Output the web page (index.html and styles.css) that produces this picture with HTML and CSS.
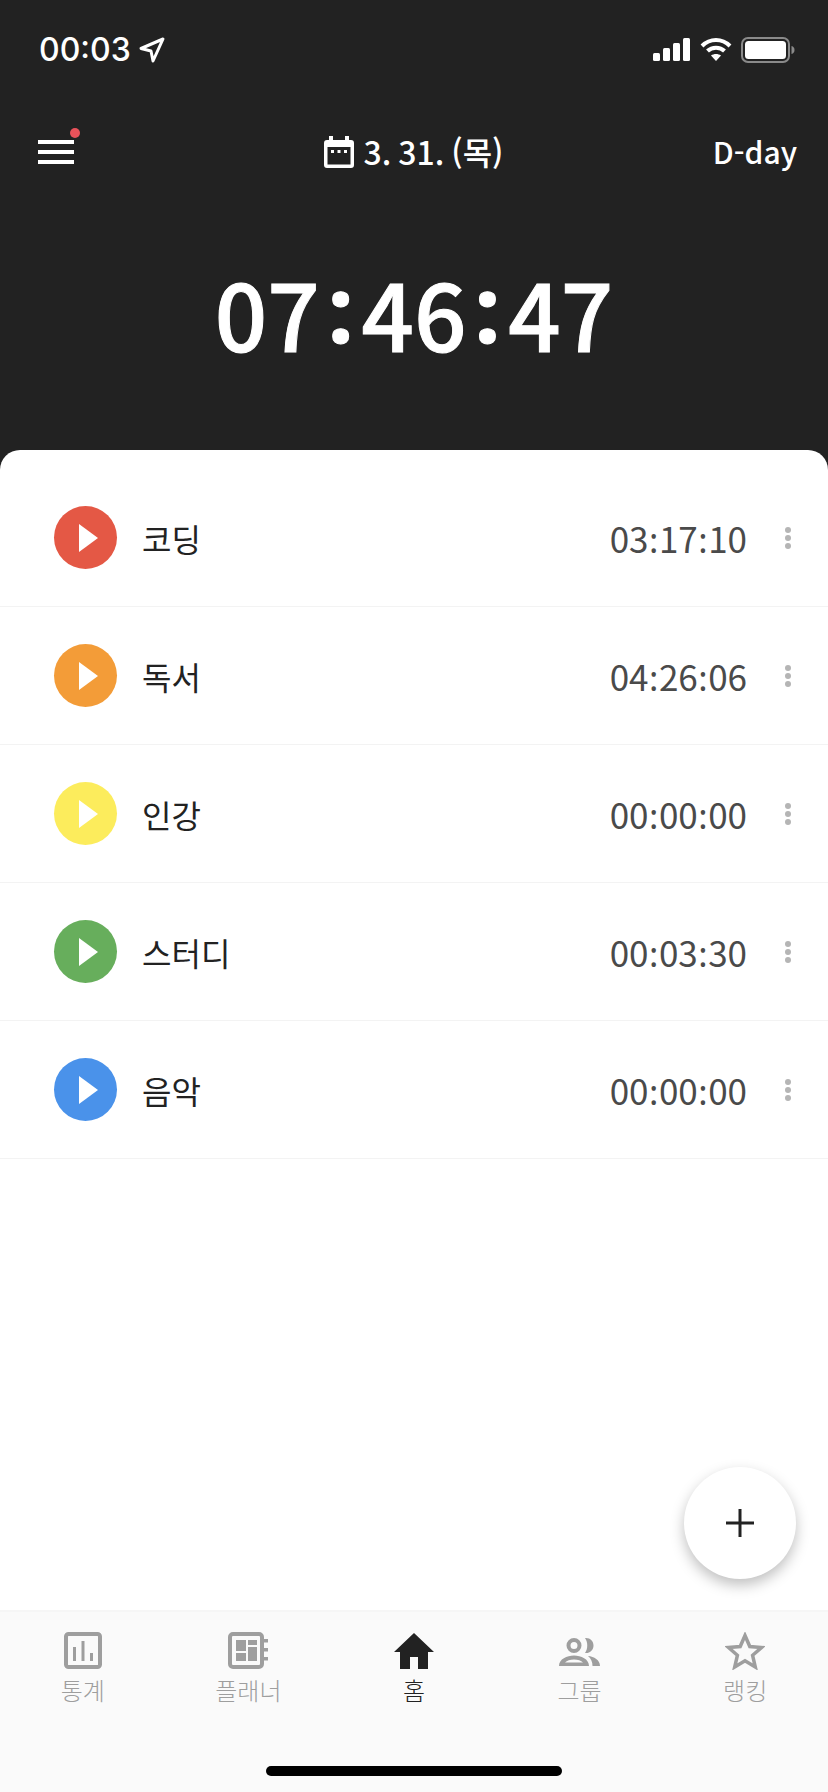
FILE: index.html
```html
<!DOCTYPE html>
<html lang="ko">
<head>
    <meta charset="UTF-8">
    <meta name="viewport" content="width=device-width, initial-scale=1.0">
    <title>타이머</title>
    <link rel="stylesheet" href="styles.css">
</head>
<body>
    <div class="page">
        <header class="header">
            <div class="status-bar">
                <div class="status-left">
                    <span class="clock">00:03</span>
                    <svg class="arrow" width="26" height="26" viewBox="0 0 26 26"><path d="M24 2 L2 11.5 L12 14 L14 24 Z" fill="none" stroke="#fff" stroke-width="3" stroke-linejoin="round"/></svg>
                </div>
                <div class="status-right">
                    <svg width="37" height="23" viewBox="0 0 37 23" fill="#fff">
                        <rect x="0" y="15" width="7" height="8" rx="1.5"/>
                        <rect x="10" y="10" width="7" height="13" rx="1.5"/>
                        <rect x="20" y="5" width="7" height="18" rx="1.5"/>
                        <rect x="30" y="0" width="7" height="23" rx="1.5"/>
                    </svg>
                    <svg width="32" height="25" viewBox="0 0 32 25" fill="none" stroke="#fff" stroke-width="4">
                        <path d="M2 9 C10 1 22 1 30 9"/>
                        <path d="M7.500 14 C12 9.500 20 9.500 24.500 14"/>
                        <path d="M16 24 L11 18.500 C14 16.500 18 16.500 21 18.500 Z" fill="#fff" stroke="none"/>
                    </svg>
                    <svg class="battery" width="54" height="26" viewBox="0 0 54 26">
                        <rect x="1" y="1" width="47" height="24" rx="6" fill="none" stroke="#8a8a8a" stroke-width="2"/>
                        <rect x="4" y="4" width="41" height="18" rx="3.500" fill="#fff"/>
                        <path d="M50.500 9 C52.500 9.500 53.500 11 53.500 13 C53.500 15 52.500 16.500 50.500 17 Z" fill="#8a8a8a"/>
                    </svg>
                </div>
            </div>
            <div class="top-bar">
                <div class="menu">
                    <span class="menu-line"></span>
                    <span class="menu-line"></span>
                    <span class="menu-line"></span>
                    <span class="menu-dot"></span>
                </div>
                <div class="date">
                    <svg width="30" height="32" viewBox="0 0 30 32">
                        <path d="M5 0 H9 V4 H21 V0 H25 V4 H27 A3 3 0 0 1 30 7 V29 A3 3 0 0 1 27 32 H3 A3 3 0 0 1 0 29 V7 A3 3 0 0 1 3 4 H5 Z" fill="#fff"/>
                        <rect x="3.500" y="11" width="23" height="17.500" fill="#222"/>
                        <rect x="7" y="14" width="3" height="3" fill="#fff"/>
                        <rect x="13.500" y="14" width="3" height="3" fill="#fff"/>
                        <rect x="20" y="14" width="3" height="3" fill="#fff"/>
                    </svg>
                    <span class="date-text">3. 31. (목)</span>
                </div>
                <div class="dday">D-day</div>
            </div>
            <div class="total-time">07<span class="colon">:</span>46<span class="colon">:</span>47</div>
        </header>

        <main class="sheet">
            <div class="row">
                <div class="play play-red"><span class="triangle"></span></div>
                <div class="subject">코딩</div>
                <div class="time">03<span class="sep">:</span>17<span class="sep">:</span>10</div>
                <div class="more"><i></i><i></i><i></i></div>
            </div>
            <div class="row">
                <div class="play play-orange"><span class="triangle"></span></div>
                <div class="subject">독서</div>
                <div class="time">04<span class="sep">:</span>26<span class="sep">:</span>06</div>
                <div class="more"><i></i><i></i><i></i></div>
            </div>
            <div class="row">
                <div class="play play-yellow"><span class="triangle"></span></div>
                <div class="subject">인강</div>
                <div class="time">00<span class="sep">:</span>00<span class="sep">:</span>00</div>
                <div class="more"><i></i><i></i><i></i></div>
            </div>
            <div class="row">
                <div class="play play-green"><span class="triangle"></span></div>
                <div class="subject">스터디</div>
                <div class="time">00<span class="sep">:</span>03<span class="sep">:</span>30</div>
                <div class="more"><i></i><i></i><i></i></div>
            </div>
            <div class="row">
                <div class="play play-blue"><span class="triangle"></span></div>
                <div class="subject">음악</div>
                <div class="time">00<span class="sep">:</span>00<span class="sep">:</span>00</div>
                <div class="more"><i></i><i></i><i></i></div>
            </div>
            <button class="fab">
                <svg width="28" height="28" viewBox="0 0 28 28"><path d="M12.500 0 H15.500 V12.500 H28 V15.500 H15.500 V28 H12.500 V15.500 H0 V12.500 H12.500 Z" fill="#222"/></svg>
            </button>
        </main>

        <nav class="tabbar">
            <div class="tabs">
                <div class="tab">
                    <svg width="38" height="38" viewBox="0 0 38 38" fill="#9e9e9e">
                        <rect x="2" y="2" width="34" height="33" rx="2.500" fill="none" stroke="#9e9e9e" stroke-width="4"/>
                        <rect x="9" y="15" width="3" height="14"/>
                        <rect x="17.500" y="9" width="3" height="20"/>
                        <rect x="26" y="21" width="3" height="8"/>
                    </svg>
                    <span>통계</span>
                </div>
                <div class="tab">
                    <svg width="40" height="38" viewBox="0 0 40 38" fill="#9e9e9e">
                        <rect x="2" y="2" width="32" height="33" rx="3" fill="none" stroke="#9e9e9e" stroke-width="4"/>
                        <rect x="8" y="8" width="10" height="11"/>
                        <rect x="20" y="8" width="9" height="5"/>
                        <rect x="8" y="21" width="10" height="8"/>
                        <rect x="20" y="15" width="9" height="14"/>
                        <rect x="35" y="7" width="5" height="3.500"/>
                        <rect x="35" y="16" width="5" height="3.500"/>
                        <rect x="35" y="25" width="5" height="3.500"/>
                    </svg>
                    <span>플래너</span>
                </div>
                <div class="tab tab-active">
                    <svg width="40" height="38" viewBox="0 0 40 38" fill="#222">
                        <path d="M20 1 L40 20 H34 V37 H24 V25 H16 V37 H6 V20 H0 Z"/>
                    </svg>
                    <span>홈</span>
                </div>
                <div class="tab">
                    <svg width="41" height="38" viewBox="0 0 41 38" fill="#9e9e9e">
                        <path fill-rule="evenodd" d="M15 6 A7.500 7.500 0 1 1 15 21 A7.500 7.500 0 1 1 15 6 Z M15 10 A3.500 3.500 0 1 0 15 17 A3.500 3.500 0 1 0 15 10 Z"/>
                        <path fill-rule="evenodd" d="M0 34 C0 27 8 23.500 15 23.500 C22 23.500 30 27 30 34 Z M6 30.500 C8 28.500 11 27.500 15 27.500 C19 27.500 22 28.500 24 30.500 Z"/>
                        <path d="M26 6 C31 5.500 34.500 9 34.500 13.500 C34.500 18 31 21.500 26 21 C29 17 29 10 26 6 Z"/>
                        <path d="M29 24 C35 24.500 41 28 41 34 H33.500 C33.500 30 32 26.500 29 24 Z"/>
                    </svg>
                    <span>그룹</span>
                </div>
                <div class="tab">
                    <svg width="40" height="38" viewBox="0 0 40 38">
                        <path d="M20 3.500 L24.800 14.500 L36.500 15.500 L27.600 23.300 L30.300 35 L20 28.800 L9.700 35 L12.400 23.300 L3.500 15.500 L15.200 14.500 Z" fill="none" stroke="#9e9e9e" stroke-width="3.500"/>
                    </svg>
                    <span>랭킹</span>
                </div>
            </div>
            <div class="home-bar"></div>
        </nav>
    </div>
</body>
</html>
```

FILE: styles.css
```css
* {
    box-sizing: border-box;
}

body {
    margin: 0;
    font-family: "Noto Sans CJK KR", "Noto Sans", sans-serif;
    background-color: #fff;
}

.page {
    width: 828px;
    height: 1792px;
    display: flex;
    flex-direction: column;
    overflow: hidden;
}

.header {
    height: 470px;
    margin-bottom: -20px;
    flex-shrink: 0;
    background-color: #222;
    color: #fff;
}

.status-bar {
    display: flex;
    justify-content: space-between;
    align-items: center;
    padding: 31px 33px 0 39px;
    height: 68px;
}

.status-left {
    display: flex;
    align-items: center;
    gap: 8px;
}

.clock {
    font-family: Inter, sans-serif;
    font-size: 32px;
    font-weight: 500;
}

.status-right {
    display: flex;
    align-items: center;
    gap: 10px;
}

.battery {
    margin-left: -1px;
}

.top-bar {
    display: grid;
    grid-template-columns: 1fr auto 1fr;
    align-items: center;
    height: 48px;
    margin-top: 60px;
    padding: 0 31px;
}

.menu {
    position: relative;
    display: flex;
    flex-direction: column;
    gap: 6px;
    width: 36px;
    margin-left: 7px;
}

.menu-line {
    display: block;
    height: 4px;
    background-color: #fff;
}

.menu-dot {
    position: absolute;
    top: -12px;
    right: -6px;
    width: 10px;
    height: 10px;
    border-radius: 50%;
    background-color: #e8525a;
}

.date {
    display: flex;
    align-items: center;
    gap: 9px;
    font-size: 32px;
    font-weight: 500;
    word-spacing: -2px;
}

.date-text {
    margin-bottom: 2px;
}

.dday {
    margin-bottom: 2px;
    text-align: right;
    font-size: 30px;
    font-weight: 500;
}

.total-time {
    margin-top: 76px;
    text-align: center;
    font-size: 92px;
    line-height: 120px;
    font-weight: 500;
    -webkit-text-stroke: 1px #fff;
}

.colon {
    margin: 0 8px;
    font-family: "Noto Sans", sans-serif;
    font-weight: 700;
    vertical-align: 9px;
    line-height: 0;
}

.sheet {
    position: relative;
    flex: 1;
    padding-top: 19px;
    background-color: #fff;
    border-radius: 20px 20px 0 0;
}

.row {
    display: flex;
    align-items: center;
    height: 138px;
    padding: 0 0 0 54px;
    border-bottom: 1px solid #f3f3f3;
}

.play {
    display: flex;
    align-items: center;
    justify-content: center;
    width: 63px;
    height: 63px;
    padding-left: 6px;
    border-radius: 50%;
}

.triangle {
    width: 0;
    height: 0;
    border-left: 19px solid #fff;
    border-top: 14px solid transparent;
    border-bottom: 14px solid transparent;
}

.play-red { background-color: #e45845; }
.play-orange { background-color: #f39c38; }
.play-yellow { background-color: #fcec5c; }
.play-green { background-color: #67ae5c; }
.play-blue { background-color: #4a92ea; }

.subject {
    flex: 1;
    margin-left: 25px;
    font-size: 32px;
    color: #222;
}

.time {
    font-size: 35px;
    color: #4a4a4a;
}

.sep {
    margin: 0 0.5px;
    font-family: "Noto Sans", sans-serif;
}

.more {
    display: flex;
    flex-direction: column;
    align-items: center;
    gap: 2px;
    width: 40px;
    margin: 0 20px 0 21px;
}

.more i {
    display: block;
    width: 6px;
    height: 6px;
    border-radius: 50%;
    background-color: #b5b5b5;
}

.fab {
    position: absolute;
    right: 32px;
    bottom: 31px;
    display: flex;
    align-items: center;
    justify-content: center;
    width: 112px;
    height: 112px;
    padding: 0;
    border: none;
    border-radius: 50%;
    background-color: #fff;
    box-shadow: 0 6px 14px rgba(0, 0, 0, 0.25);
}

.tabbar {
    position: relative;
    height: 182px;
    flex-shrink: 0;
    background-color: #fafafa;
    border-top: 2px solid #f6f6f6;
}

.tabs {
    display: grid;
    grid-template-columns: repeat(5, 1fr);
    padding-top: 20px;
}

.tab {
    display: flex;
    flex-direction: column;
    align-items: center;
    gap: 4px;
    font-size: 24px;
    line-height: 32px;
    font-weight: 300;
    color: #9e9e9e;
}

.tab-active {
    color: #222;
}

.home-bar {
    position: absolute;
    left: 266px;
    bottom: 16px;
    width: 296px;
    height: 10px;
    border-radius: 5px;
    background-color: #000;
}
```
